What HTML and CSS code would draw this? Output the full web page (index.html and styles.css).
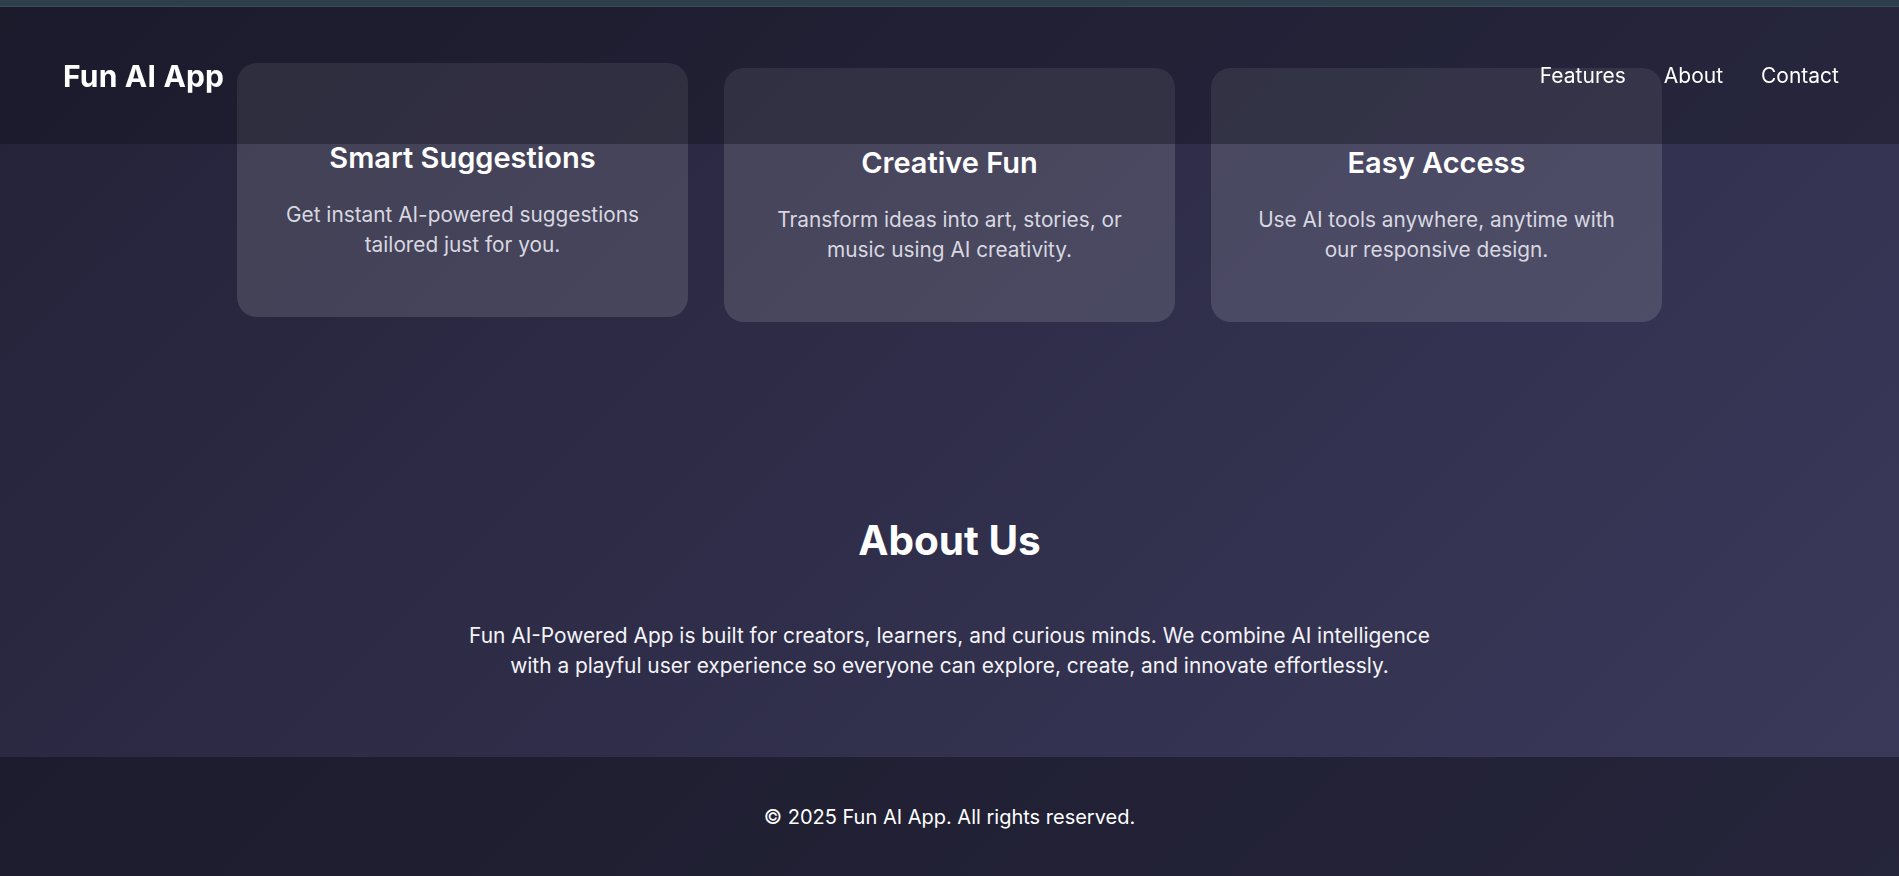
FILE: index.html
```html
<!DOCTYPE html>
<html lang="en">
<head>
<meta charset="utf-8">
<title>Fun AI App</title>
<link rel="stylesheet" href="styles.css">
</head>
<body>
<div class="topbar"></div>
<header class="site-header">
  <div class="logo">Fun AI App</div>
  <nav class="nav">
    <a href="#features">Features</a>
    <a href="#about">About</a>
    <a href="#contact">Contact</a>
  </nav>
</header>
<main class="main">
  <section class="features" id="features">
    <div class="card card-raised">
      <h3 class="card-title">Smart Suggestions</h3>
      <p class="card-text">Get instant AI-powered suggestions tailored just for you.</p>
    </div>
    <div class="card">
      <h3 class="card-title">Creative Fun</h3>
      <p class="card-text">Transform ideas into art, stories, or music using AI creativity.</p>
    </div>
    <div class="card">
      <h3 class="card-title">Easy Access</h3>
      <p class="card-text">Use AI tools anywhere, anytime with our responsive design.</p>
    </div>
  </section>
  <section class="about" id="about">
    <h2 class="about-title">About Us</h2>
    <p class="about-text">Fun AI-Powered App is built for creators, learners, and curious minds. We combine AI intelligence with a playful user experience so everyone can explore, create, and innovate effortlessly.</p>
  </section>
</main>
<footer class="footer" id="contact">
  <p>&copy; 2025 Fun AI App. All rights reserved.</p>
</footer>
</body>
</html>
```
FILE: styles.css
```css
* { box-sizing: border-box; }
html, body { margin: 0; padding: 0; }
body {
  height: 876px;
  overflow: hidden;
  display: flex;
  flex-direction: column;
  font-family: Inter, "Open Sans", sans-serif;
  color: #ffffff;
  background: linear-gradient(135deg, #242238 0%, #3b3a5c 100%);
}
.topbar {
  height: 7px;
  flex: none;
  background: #2c3f4a;
  border-bottom: 1px solid #3b4c56;
}
.site-header {
  position: fixed;
  top: 7px;
  left: 0;
  right: 0;
  height: 137px;
  display: flex;
  align-items: center;
  justify-content: space-between;
  padding: 0 60px 0 63px;
  background: rgba(15, 15, 25, 0.38);
  z-index: 10;
}
.logo {
  font-size: 30px;
  font-weight: 700;
  letter-spacing: 0.2px;
}
.nav {
  display: flex;
  gap: 38px;
}
.nav a {
  color: #ffffff;
  text-decoration: none;
  font-size: 21px;
  font-weight: 400;
}
.main {
  flex: 1;
  display: flex;
  flex-direction: column;
}
.features {
  display: grid;
  grid-template-columns: repeat(3, 451px);
  gap: 36px;
  justify-content: center;
  padding-top: 61px;
}
.card {
  height: 254px;
  padding: 77px 36px 0;
  border-radius: 20px;
  background: rgba(255, 255, 255, 0.13);
  text-align: center;
}
.card-raised { transform: translateY(-5px); }
.card-title {
  margin: 0 0 24px;
  font-size: 29px;
  line-height: 36px;
  font-weight: 600;
}
.card-text {
  margin: 0;
  font-size: 20.8px;
  line-height: 30px;
  color: #d8d8e0;
}
.about {
  padding-top: 195px;
  text-align: center;
}
.about-title {
  margin: 0 0 56px;
  font-size: 40.5px;
  line-height: 48px;
  font-weight: 700;
}
.about-text {
  max-width: 1000px;
  margin: 0 auto;
  font-size: 20.9px;
  line-height: 30px;
  color: #f4f4f8;
}
.footer {
  height: 119px;
  flex: none;
  display: flex;
  align-items: center;
  justify-content: center;
  background: rgba(15, 15, 25, 0.5);
}
.footer p {
  margin: 0;
  font-size: 20px;
}
```
